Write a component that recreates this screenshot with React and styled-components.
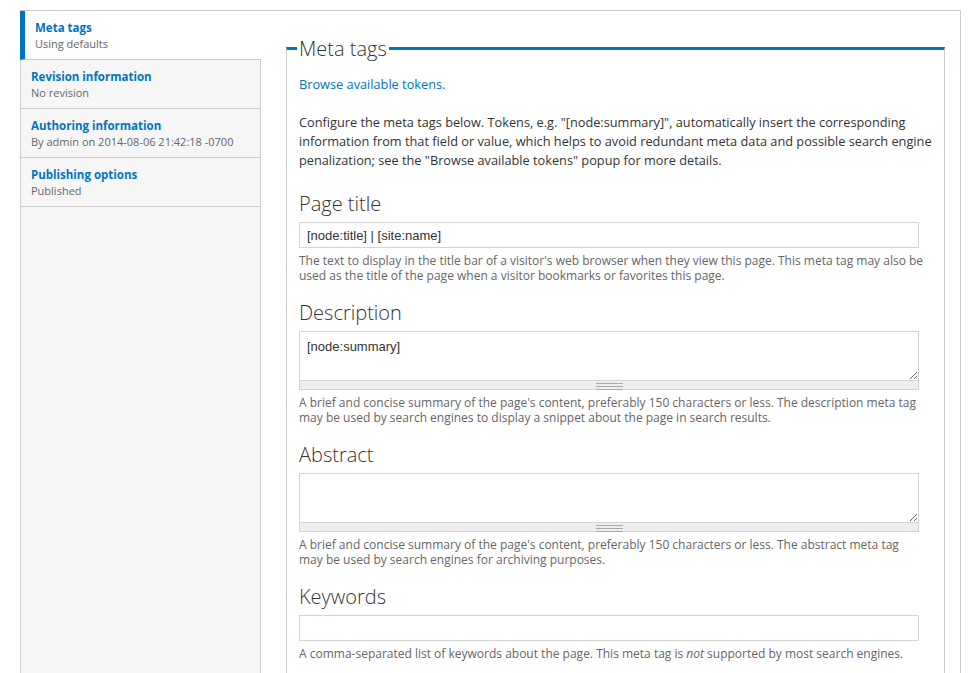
import React from 'react';
import styled, { createGlobalStyle } from 'styled-components';

const GlobalStyle = createGlobalStyle`
  html, body {
    margin: 0;
    padding: 0;
    background: #ffffff;
    overflow: hidden;
  }
  body {
    font-family: 'Open Sans', sans-serif;
    color: #333333;
  }
  * {
    box-sizing: border-box;
  }
`;

const Page = styled.div`
  padding: 10px 9px 0 20px;
`;

const VerticalTabs = styled.div`
  display: flex;
  border: 1px solid #cccccc;
  min-height: 760px;
`;

const TabList = styled.ul`
  list-style: none;
  margin: 0;
  padding: 0;
  width: 240px;
  flex-shrink: 0;
  background: #f6f6f6;
  border-right: 1px solid #cccccc;
`;

const TabItem = styled.li`
  height: 49px;
  padding: 9px 10px 0 10px;
  border-bottom: 1px solid #cccccc;
  background: ${(p) => (p.$active ? '#ffffff' : 'transparent')};
  border-left: ${(p) => (p.$active ? '5px solid #0074bd' : 'none')};
  margin: ${(p) => (p.$active ? '0 -1px 0 -1px' : '0')};
  position: relative;
`;

const TabTitle = styled.div`
  font-size: 11.5px;
  font-weight: 700;
  line-height: 16px;
  color: #0074bd;
`;

const TabSummary = styled.div`
  font-size: 11px;
  line-height: 16px;
  color: #666666;
`;

const Pane = styled.div`
  flex: 1;
  min-width: 0;
  padding: 24px 15px 0 25px;
`;

const Fieldset = styled.fieldset`
  margin: 0;
  min-width: 0;
  border: 1px solid #cccccc;
  border-top: 3px solid #0074bd;
  padding: 0 6px 40px 12px;
  min-height: 700px;
`;

const Legend = styled.legend`
  font-size: 20px;
  font-weight: 300;
  line-height: 27px;
  padding: 0 2px;
  margin-left: -2px;
  color: #333333;
`;

const TokenLink = styled.a`
  display: block;
  margin-top: 13px;
  font-size: 12.75px;
  line-height: 19px;
  color: #0074bd;
  text-decoration: none;
`;

const Intro = styled.p`
  margin: 19px 0 21px;
  font-size: 12.75px;
  line-height: 19px;
  color: #333333;
`;

const FormItem = styled.div`
  margin-bottom: 17px;
`;

const Label = styled.label`
  display: block;
  font-size: 20px;
  font-weight: 300;
  line-height: 26px;
  margin-bottom: 5px;
  color: #333333;
`;

const TextInput = styled.input`
  display: block;
  width: 620px;
  height: 26px;
  border: 1px solid #d4d4d4;
  padding: 0 7px;
  font-family: 'Liberation Sans', Arial, sans-serif;
  font-size: 13px;
  color: #333333;
  background: #ffffff;
  outline: none;
`;

const TextareaWrap = styled.div`
  width: 620px;
`;

const TextArea = styled.textarea`
  display: block;
  width: 620px;
  height: 50px;
  margin: 0;
  border: 1px solid #d4d4d4;
  padding: 7px 7px;
  font-family: 'Liberation Sans', Arial, sans-serif;
  font-size: 13px;
  line-height: 15px;
  color: #333333;
  resize: vertical;
  outline: none;
`;

const Grippie = styled.div`
  height: 9px;
  background: #eeeeee;
  border: 1px solid #d4d4d4;
  border-top: none;
  display: flex;
  justify-content: center;
  align-items: flex-start;
  padding-top: 2px;

  &::after {
    content: '';
    width: 27px;
    height: 5px;
    border-top: 1px solid #aaaaaa;
    border-bottom: 1px solid #aaaaaa;
    background: linear-gradient(#aaaaaa, #aaaaaa) center / 100% 1px no-repeat;
  }
`;

const Description = styled.div`
  margin-top: 5px;
  width: 625px;
  font-size: 12px;
  line-height: 15px;
  color: #666666;
`;

const tabs = [
  { title: 'Meta tags', summary: 'Using defaults', active: true },
  { title: 'Revision information', summary: 'No revision' },
  { title: 'Authoring information', summary: 'By admin on 2014-08-06 21:42:18 -0700' },
  { title: 'Publishing options', summary: 'Published' },
];

const App = () => (
  <Page>
    <GlobalStyle />
    <VerticalTabs>
      <TabList>
        {tabs.map((t) => (
          <TabItem key={t.title} $active={t.active}>
            <TabTitle>{t.title}</TabTitle>
            <TabSummary>{t.summary}</TabSummary>
          </TabItem>
        ))}
      </TabList>
      <Pane>
        <Fieldset>
          <Legend>Meta tags</Legend>
          <TokenLink href="#">Browse available tokens.</TokenLink>
          <Intro>
            Configure the meta tags below. Tokens, e.g. "[node:summary]", automatically insert the
            corresponding information from that field or value, which helps to avoid redundant meta
            data and possible search engine penalization; see the "Browse available tokens" popup for
            more details.
          </Intro>

          <FormItem>
            <Label>Page title</Label>
            <TextInput defaultValue="[node:title] | [site:name]" />
            <Description>
              The text to display in the title bar of a visitor's web browser when they view this
              page. This meta tag may also be used as the title of the page when a visitor bookmarks
              or favorites this page.
            </Description>
          </FormItem>

          <FormItem>
            <Label>Description</Label>
            <TextareaWrap>
              <TextArea defaultValue="[node:summary]" />
              <Grippie />
            </TextareaWrap>
            <Description>
              A brief and concise summary of the page's content, preferably 150 characters or less.
              The description meta tag may be used by search engines to display a snippet about the
              page in search results.
            </Description>
          </FormItem>

          <FormItem>
            <Label>Abstract</Label>
            <TextareaWrap>
              <TextArea defaultValue="" />
              <Grippie />
            </TextareaWrap>
            <Description>
              A brief and concise summary of the page's content, preferably 150 characters or less.
              The abstract meta tag may be used by search engines for archiving purposes.
            </Description>
          </FormItem>

          <FormItem>
            <Label>Keywords</Label>
            <TextInput defaultValue="" />
            <Description>
              A comma-separated list of keywords about the page. This meta tag is <em>not</em>{' '}
              supported by most search engines.
            </Description>
          </FormItem>
        </Fieldset>
      </Pane>
    </VerticalTabs>
  </Page>
);

export default App;
